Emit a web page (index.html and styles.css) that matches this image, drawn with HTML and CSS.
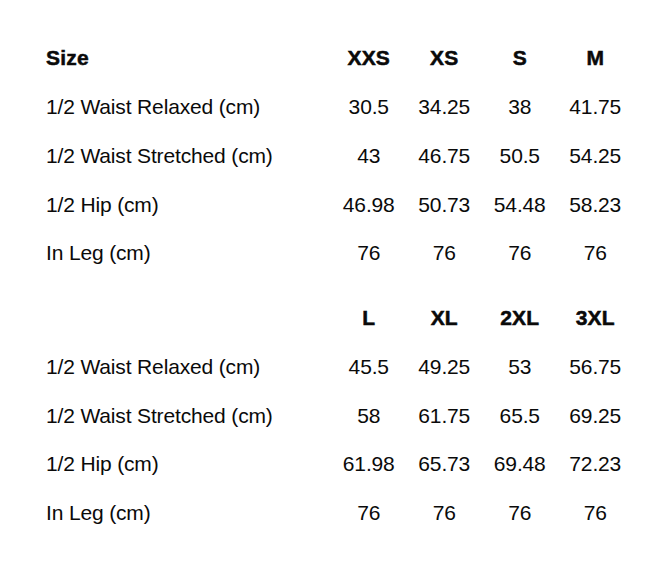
FILE: index.html
```html
<!DOCTYPE html>
<html>
<head>
<meta charset="utf-8">
<link rel="stylesheet" href="styles.css">
</head>
<body>
<div class="page">
  <div class="chart">
    <div class="cell label head">Size</div>
    <div class="cell head">XXS</div>
    <div class="cell head">XS</div>
    <div class="cell head">S</div>
    <div class="cell head">M</div>

    <div class="cell label">1/2 Waist Relaxed (cm)</div>
    <div class="cell">30.5</div><div class="cell">34.25</div><div class="cell">38</div><div class="cell">41.75</div>

    <div class="cell label">1/2 Waist Stretched (cm)</div>
    <div class="cell">43</div><div class="cell">46.75</div><div class="cell">50.5</div><div class="cell">54.25</div>

    <div class="cell label">1/2 Hip (cm)</div>
    <div class="cell">46.98</div><div class="cell">50.73</div><div class="cell">54.48</div><div class="cell">58.23</div>

    <div class="cell label">In Leg (cm)</div>
    <div class="cell">76</div><div class="cell">76</div><div class="cell">76</div><div class="cell">76</div>
  </div>

  <div class="chart">
    <div class="cell label head"></div>
    <div class="cell head">L</div>
    <div class="cell head">XL</div>
    <div class="cell head">2XL</div>
    <div class="cell head">3XL</div>

    <div class="cell label">1/2 Waist Relaxed (cm)</div>
    <div class="cell">45.5</div><div class="cell">49.25</div><div class="cell">53</div><div class="cell">56.75</div>

    <div class="cell label">1/2 Waist Stretched (cm)</div>
    <div class="cell">58</div><div class="cell">61.75</div><div class="cell">65.5</div><div class="cell">69.25</div>

    <div class="cell label">1/2 Hip (cm)</div>
    <div class="cell">61.98</div><div class="cell">65.73</div><div class="cell">69.48</div><div class="cell">72.23</div>

    <div class="cell label">In Leg (cm)</div>
    <div class="cell">76</div><div class="cell">76</div><div class="cell">76</div><div class="cell">76</div>
  </div>
</div>
</body>
</html>
```

FILE: styles.css
```css
html, body {
  margin: 0;
  padding: 0;
  background: #ffffff;
}
body {
  font-family: "Liberation Sans", Arial, sans-serif;
  color: #0a0a0a;
}
.page {
  padding: 34px 34px 0 46px;
  display: flex;
  flex-direction: column;
  gap: 16px;
}
.chart {
  display: grid;
  grid-template-columns: 285px repeat(4, 75.5px);
  grid-auto-rows: 48.75px;
}
.cell {
  display: flex;
  align-items: center;
  justify-content: center;
  font-size: 21px;
  letter-spacing: -0.15px;
  white-space: nowrap;
}
.cell.label {
  justify-content: flex-start;
}
.cell.head {
  font-weight: 700;
  letter-spacing: 0.2px;
  -webkit-text-stroke: 0.5px #0a0a0a;
}
```
